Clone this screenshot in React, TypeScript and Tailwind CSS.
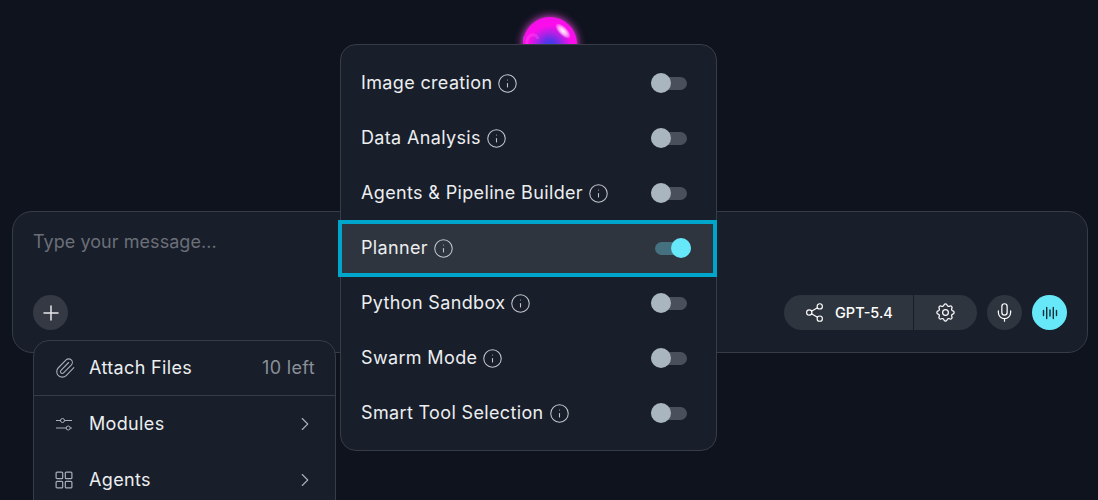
import React from 'react';
import { Info, Share2, Mic, Plus, Paperclip, ChevronRight } from 'lucide-react';
import { TbSettings } from 'react-icons/tb';

const tools = [
  { label: 'Image creation', on: false },
  { label: 'Data Analysis', on: false },
  { label: 'Agents & Pipeline Builder', on: false },
  { label: 'Planner', on: true },
  { label: 'Python Sandbox', on: false },
  { label: 'Swarm Mode', on: false },
  { label: 'Smart Tool Selection', on: false },
];

const labelText = "text-[18px] font-normal leading-[26px] tracking-[0.35px]";

const Toggle = ({ on }: { on: boolean }) => (
  <div className={`relative h-[13px] w-9 rounded-full ${on ? 'bg-[#44707f]' : 'bg-[#4a505b]'}`}>
    <div className={`absolute top-[-4px] size-5 rounded-full ${on ? 'right-0 bg-[#67e8f9]' : 'left-0 bg-[#a9b5bf]'}`} />
  </div>
);

const ToolRow = ({ label, on }: { label: string; on: boolean }) => (
  <div
    className={
      on
        ? 'relative z-10 -my-px ml-[-3px] mr-[-1px] flex h-[57px] items-center justify-between border-4 border-[#00a5cb] bg-[#2f353f] pl-[19px] pr-[22px]'
        : 'flex h-[55px] items-center justify-between pl-5 pr-[29px]'
    }
  >
    <div className="flex items-center gap-[5px]">
      <span className={`${labelText} pb-0.5 text-[#eceef0]`}>{label}</span>
      <Info size={21} strokeWidth={1.2} className="text-[#c3c7cc]" />
    </div>
    <Toggle on={on} />
  </div>
);

const Orb = () => (
  <svg width="66" height="66" viewBox="0 0 66 66" className="drop-shadow-[0_0_4px_#ff4df0]">
    <defs>
      <radialGradient id="orbBase" cx="0.5" cy="0.56" r="0.62">
        <stop offset="0" stopColor="#2d46e8" />
        <stop offset="0.2" stopColor="#5535e8" />
        <stop offset="0.44" stopColor="#b420e6" />
        <stop offset="0.66" stopColor="#ff0cec" />
        <stop offset="1" stopColor="#f010e8" />
      </radialGradient>
      <radialGradient id="orbShine" cx="0.5" cy="0.5" r="0.5">
        <stop offset="0" stopColor="#ffffff" />
        <stop offset="0.5" stopColor="#ffd0f8" stopOpacity="0.8" />
        <stop offset="1" stopColor="#ffffff" stopOpacity="0" />
      </radialGradient>
    </defs>
    <ellipse cx="9" cy="29" rx="3" ry="5" fill="#55a0e0" opacity="0.6" />
    <circle cx="33" cy="33" r="27" fill="url(#orbBase)" />
    <path d="M10 33 C 9 23 19 21 21 28" fill="none" stroke="#ff7af0" strokeOpacity="0.25" strokeWidth="3" />
    <ellipse cx="46" cy="20" rx="10" ry="4.5" fill="url(#orbShine)" transform="rotate(45 46 20)" />
  </svg>
);

const VoiceIcon = () => (
  <svg width="16" height="16" viewBox="0 0 16 16" fill="none" stroke="#10303a" strokeWidth="1.4" strokeLinecap="round">
    <path d="M1.5 5.5v5M4.7 2.5v11M8 5v6M11.3 2.5v11M14.5 5.5v5" />
  </svg>
);

const SlidersIcon = () => (
  <svg width="18" height="18" viewBox="0 0 18 18" fill="none" stroke="#a9b0b8" strokeWidth="1">
    <path d="M1 5.5h5M9.500 5.5h7.500M1 13h10.500M15 13h2" />
    <circle cx="7.500" cy="5.500" r="2" />
    <circle cx="13.200" cy="13" r="2" />
  </svg>
);

const GridIcon = () => (
  <svg width="18" height="18" viewBox="0 0 18 18" fill="none" stroke="#a9b0b8" strokeWidth="1.2">
    <rect x="1.100" y="1.100" width="6.600" height="6.600" rx="1" />
    <rect x="10.300" y="1.100" width="6.600" height="6.600" rx="1" />
    <rect x="1.100" y="10.300" width="6.600" height="6.600" rx="1" />
    <rect x="10.300" y="10.300" width="6.600" height="6.600" rx="1" />
  </svg>
);

const App = () => {
  return (
    <div className="relative h-[500px] w-[1098px] overflow-hidden bg-[#0f131e] font-['Inter',sans-serif]">
      <div className="flex justify-center pl-[2px] pt-[11px]">
        <Orb />
      </div>

      <div className="ml-3 mr-[10px] mt-[134px] flex h-[142px] flex-col justify-between rounded-[20px] border border-[#383c47] bg-[#181e2a] px-5 pb-[22px] pt-[17px]">
        <div className="text-[18px] leading-[26px] tracking-[0.05px] text-[#6b6f78]">Type your message...</div>
        <div className="flex items-center justify-between">
          <button className="flex size-[35px] items-center justify-center rounded-full bg-[#343944] text-[#e6e8ea]">
            <Plus size={24} strokeWidth={1.5} />
          </button>
          <div className="flex items-center gap-[10px]">
            <div className="flex h-[35px] w-[193px] items-center rounded-full bg-[#2f353f] text-white">
              <div className="flex h-full w-[130px] items-center gap-[10px] border-r border-[#181e2a] pl-[20px]">
                <Share2 size={21} strokeWidth={1.3} />
                <span className="text-[14.500px] font-medium">GPT-5.4</span>
              </div>
              <div className="flex flex-1 items-center justify-center">
                <TbSettings size={23} strokeWidth={1.3} />
              </div>
            </div>
            <button className="flex size-[35px] items-center justify-center rounded-full bg-[#2f353f] text-white">
              <Mic size={21} strokeWidth={1.4} />
            </button>
            <button className="flex size-[35px] items-center justify-center rounded-full bg-[#67e8f9]">
              <VoiceIcon />
            </button>
          </div>
        </div>
      </div>

      {/* tools popover */}
      <div className="absolute left-[340px] top-[44px] w-[377px] rounded-2xl border border-[#383c47] bg-[#181e2a] pb-[9px] pt-[11px]">
        {tools.map(t => (
          <ToolRow key={t.label} label={t.label} on={t.on} />
        ))}
      </div>

      {/* plus menu */}
      <div className="absolute left-[33px] top-[340px] h-[200px] w-[303px] rounded-2xl border border-[#383c47] bg-[#181e2a]">
        <div className="flex h-[55px] items-center justify-between border-b border-[#383c47] pl-[20px] pr-5">
          <div className="flex items-center gap-[13px]">
            <Paperclip size={22} strokeWidth={1.2} className="text-[#a9b0b8]" />
            <span className={`${labelText} text-[#eceef0]`}>Attach Files</span>
          </div>
          <span className={`${labelText} text-[#8b9097]`}>10 left</span>
        </div>
        <div className="flex h-[56px] items-center justify-between pl-[21px] pr-[19px]">
          <div className="flex items-center gap-[16px]">
            <SlidersIcon />
            <span className={`${labelText} text-[#eceef0]`}>Modules</span>
          </div>
          <ChevronRight size={22} strokeWidth={1.25} className="text-[#a9b0b8]" />
        </div>
        <div className="flex h-[55px] items-center justify-between pl-[21px] pr-[19px]">
          <div className="flex items-center gap-[16px]">
            <GridIcon />
            <span className={`${labelText} text-[#eceef0]`}>Agents</span>
          </div>
          <ChevronRight size={22} strokeWidth={1.25} className="text-[#a9b0b8]" />
        </div>
      </div>
    </div>
  );
};

export default App;
